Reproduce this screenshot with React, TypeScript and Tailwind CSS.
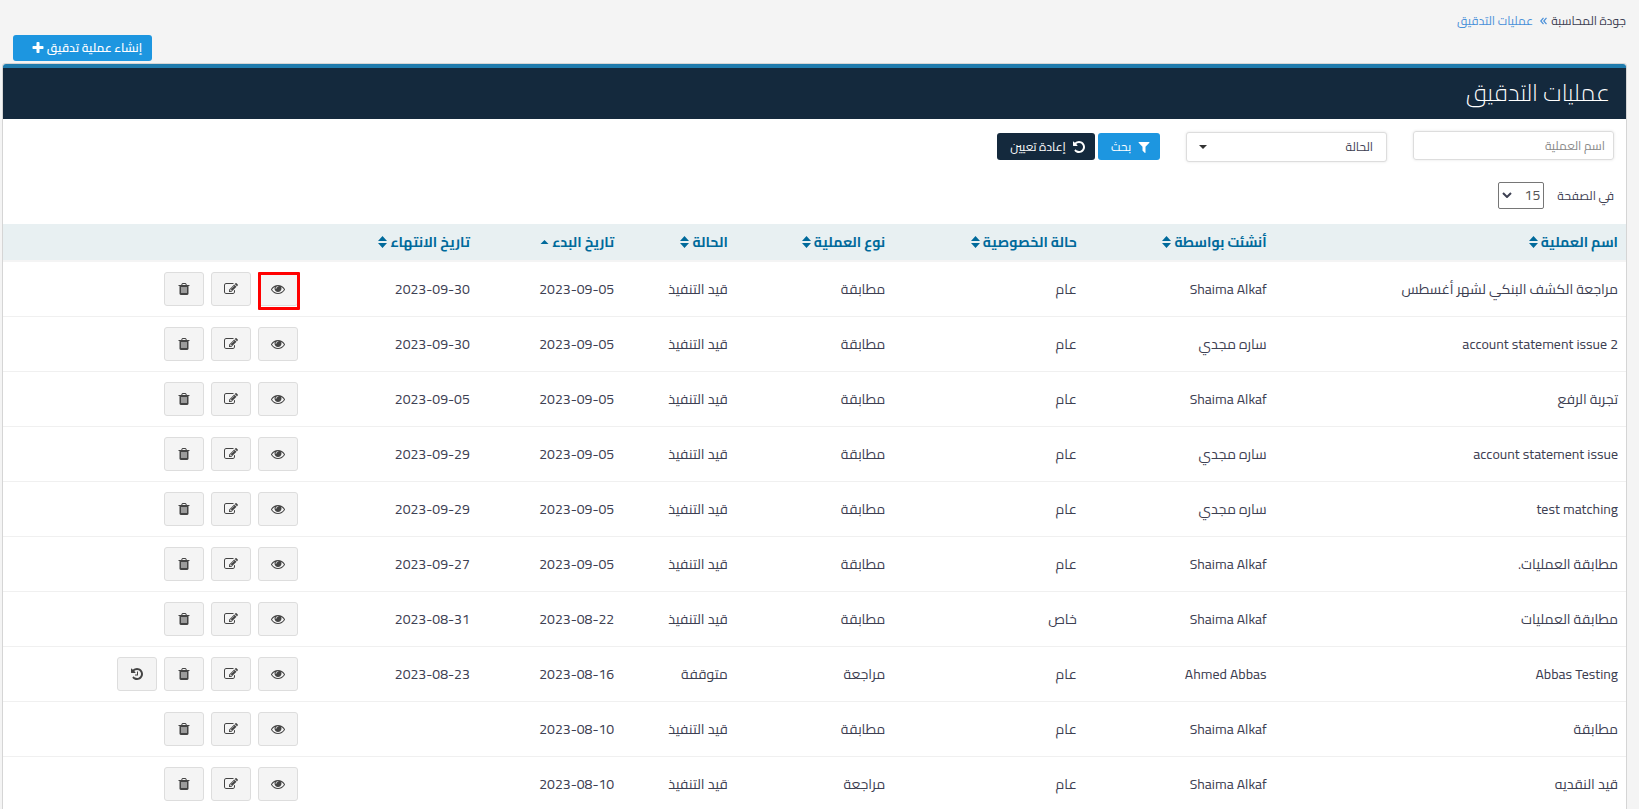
import React from "react";

const icons = {
  eye: "M1664 960q-152-236-381-353 61 104 61 225 0 185-131.5 316.5t-316.5 131.5-316.5-131.5-131.5-316.5q0-121 61-225-229 117-381 353 133 205 333.5 326.5t434.5 121.5 434.5-121.5 333.5-326.5zm-720-384q0-20-14-34t-34-14q-125 0-214.5 89.5t-89.5 214.5q0 20 14 34t34 14 34-14 14-34q0-86 61-147t147-61q20 0 34-14t14-34zm848 384q0 34-20 69-140 230-376.5 368.5t-499.5 138.5-499.5-139-376.5-368q-20-35-20-69t20-69q140-229 376.5-368t499.5-139 499.5 139 376.5 368q20 35 20 69z",
  edit: "M888 1184l116-116-152-152-116 116v56h96v96h56zm440-720q-16-16-33 1l-350 350q-17 17-1 33t33-1l350-350q17-17 1-33zm80 594v190q0 119-84.5 203.5t-203.5 84.5h-832q-119 0-203.5-84.5t-84.5-203.5v-832q0-119 84.5-203.5t203.5-84.5h832q63 0 117 25 15 7 18 23 3 17-9 29l-49 49q-14 14-32 8-23-6-45-6h-832q-66 0-113 47t-47 113v832q0 66 47 113t113 47h832q66 0 113-47t47-113v-126q0-13 9-22l64-64q15-15 35-7t20 29zm-96-738l288 288-672 672h-288v-288zm444 132l-92 92-288-288 92-92q28-28 68-28t68 28l152 152q28 28 28 68t-28 68z",
  trash: "M704 1376v-704q0-14-9-23t-23-9h-64q-14 0-23 9t-9 23v704q0 14 9 23t23 9h64q14 0 23-9t9-23zm256 0v-704q0-14-9-23t-23-9h-64q-14 0-23 9t-9 23v704q0 14 9 23t23 9h64q14 0 23-9t9-23zm256 0v-704q0-14-9-23t-23-9h-64q-14 0-23 9t-9 23v704q0 14 9 23t23 9h64q14 0 23-9t9-23zm-544-992h448l-48-117q-7-9-17-11h-317q-10 2-17 11zm928 32v64q0 14-9 23t-23 9h-96v948q0 83-47 143.5t-113 60.5h-832q-66 0-113-58.5t-47-141.5v-952h-96q-14 0-23-9t-9-23v-64q0-14 9-23t23-9h309l70-167q15-37 54-63t79-26h320q40 0 79 26t54 63l70 167h309q14 0 23 9t9 23z",
  undo: "M1664 896q0 156-61 298t-164 245-245 164-298 61q-172 0-327-72.5t-264-204.5q-7-10-6.5-22.5t8.5-20.5l137-138q10-9 25-9 16 2 23 12 73 95 179 147t225 52q104 0 198.5-40.5t163.5-109.5 109.5-163.5 40.5-198.5-40.5-198.5-109.5-163.5-163.5-109.5-198.5-40.5q-98 0-188 35.5t-160 101.5l137 138q31 30 14 69-17 40-59 40h-448q-26 0-45-19t-19-45v-448q0-42 40-59 39-17 69 14l130 129q107-101 244.5-156.5t284.5-55.5q156 0 298 61t245 164 164 245 61 298z",
  history: "M1664 896q0 156-61 298t-164 245-245 164-298 61q-172 0-327-72.5t-264-204.5q-7-10-6.5-22.5t8.5-20.5l137-138q10-9 25-9 16 2 23 12 73 95 179 147t225 52q104 0 198.5-40.5t163.5-109.5 109.5-163.5 40.5-198.5-40.5-198.5-109.5-163.5-163.5-109.5-198.5-40.5q-98 0-188 35.5t-160 101.5l137 138q31 30 14 69-17 40-59 40h-448q-26 0-45-19t-19-45v-448q0-42 40-59 39-17 69 14l130 129q107-101 244.5-156.5t284.5-55.5q156 0 298 61t245 164 164 245 61 298zm-640-288v448q0 14-9 23t-23 9h-320q-14 0-23-9t-9-23v-64q0-14 9-23t23-9h224v-352q0-14 9-23t23-9h64q14 0 23 9t9 23z",
  filter: "M1595 295q17 41-14 70l-493 493v742q0 42-39 59-13 5-25 5-27 0-45-19l-256-256q-19-19-19-45v-486l-493-493q-31-29-14-70 17-39 59-39h1280q42 0 59 39z",
  plus: "M1600 736v192q0 40-28 68t-68 28h-416v416q0 40-28 68t-68 28h-192q-40 0-68-28t-28-68v-416h-416q-40 0-68-28t-28-68v-192q0-40 28-68t68-28h416v-416q0-40 28-68t68-28h192q40 0 68 28t28 68v416h416q40 0 68 28t28 68z",
};

type IconName = keyof typeof icons;

function Icon({ name }: { name: IconName }) {
  return (
    <svg viewBox="0 0 1792 1792" fill="currentColor" aria-hidden="true" className="size-3.5 shrink-0">
      <path d={icons[name]} />
    </svg>
  );
}

function SortMark({ ascending }: { ascending?: boolean }) {
  return (
    <svg viewBox="0 0 9 12" fill="currentColor" aria-hidden="true" className="h-3 w-[9px] shrink-0">
      {ascending ? <path d="M0.5 8 4.5 4 8.5 8z" /> : <path d="M0 5 4.5 0 9 5zM0 7h9L4.5 12z" />}
    </svg>
  );
}

const columns = [
  { label: "اسم العملية", width: "w-[21.65%]" },
  { label: "أنشئت بواسطة", width: "w-[11.7%]" },
  { label: "حالة الخصوصية", width: "w-[11.8%]" },
  { label: "نوع العملية", width: "w-[9.7%]" },
  { label: "الحالة", width: "w-[7%]" },
  { label: "تاريخ البدء", width: "w-[8.9%]", ascending: true },
  { label: "تاريخ الانتهاء", width: "w-[10.6%]" },
];

const rows = [
  ["مراجعة الكشف البنكي لشهر أغسطس", "Shaima Alkaf", "عام", "مطابقة", "قيد التنفيذ", "2023-09-05", "2023-09-30"],
  ["account statement issue 2", "ساره مجدي", "عام", "مطابقة", "قيد التنفيذ", "2023-09-05", "2023-09-30"],
  ["تجربة الرفع", "Shaima Alkaf", "عام", "مطابقة", "قيد التنفيذ", "2023-09-05", "2023-09-05"],
  ["account statement issue", "ساره مجدي", "عام", "مطابقة", "قيد التنفيذ", "2023-09-05", "2023-09-29"],
  ["test matching", "ساره مجدي", "عام", "مطابقة", "قيد التنفيذ", "2023-09-05", "2023-09-29"],
  ["مطابقة العمليات.", "Shaima Alkaf", "عام", "مطابقة", "قيد التنفيذ", "2023-09-05", "2023-09-27"],
  ["مطابقة العمليات", "Shaima Alkaf", "خاص", "مطابقة", "قيد التنفيذ", "2023-08-22", "2023-08-31"],
  ["Abbas Testing", "Ahmed Abbas", "عام", "مراجعة", "متوقفة", "2023-08-16", "2023-08-23"],
  ["مطابقة", "Shaima Alkaf", "عام", "مطابقة", "قيد التنفيذ", "2023-08-10", ""],
  ["قيد النقديه", "Shaima Alkaf", "عام", "مراجعة", "قيد التنفيذ", "2023-08-10", ""],
];

function ActionButton({ icon, label }: { icon: IconName; label: string }) {
  return (
    <button
      type="button"
      aria-label={label}
      className="flex h-[34px] w-10 items-center justify-center rounded-[3px] border border-[#ddd] bg-[#f4f4f4] text-[#444]"
    >
      <Icon name={icon} />
    </button>
  );
}

export default function App() {
  return (
    <div
      dir="rtl"
      lang="ar"
      className="h-screen overflow-hidden bg-[#f4f4f4] pr-3 pl-0.5 font-[Cairo,'Open_Sans','DejaVu_Sans',sans-serif] text-sm text-[#3d4052]"
    >
      <nav aria-label="مسار التنقل" className="flex h-[35px] items-center pt-[7px] pr-px text-xs">
        <a href="#home">جودة المحاسبة</a>
        <svg viewBox="0 0 7 8" fill="none" stroke="#4a90d9" strokeWidth="1.2" aria-hidden="true" className="mr-1 ml-[7px] h-2 w-[7px]">
          <path d="M3.5 0.8 0.8 4l2.7 3.2M6.5 0.8 3.8 4l2.7 3.2" />
        </svg>
        <a href="#audits" className="text-[#4a90d9]">عمليات التدقيق</a>
      </nav>
      <div className="flex h-7 justify-end pl-[11px]">
        <button type="button" className="flex h-[26px] w-[139px] items-center gap-0.5 rounded-[3px] bg-[#1d96e0] pr-2.5 text-xs font-semibold whitespace-nowrap text-white">
          إنشاء عملية تدقيق
          <Icon name="plus" />
        </button>
      </div>

      <main className="rounded-t-[3px] border border-[#d5d5d5] bg-white">
        <header className="flex h-[55px] items-center rounded-t-[3px] border-t-4 border-[#1f7bad] bg-[#14293d] pr-4 pb-0.5">
          <h1 className="text-2xl font-light text-white">عمليات التدقيق</h1>
        </header>

        <form className="flex h-14 items-center gap-[26px] pr-3">
          <input
            type="text"
            aria-label="اسم العملية"
            placeholder="اسم العملية"
            className="mb-[3px] h-[29px] w-[201px] rounded-[3px] border border-[#ddd] px-2 text-xs shadow-[0_0_3px_#e5e5e5] placeholder:text-[#888]"
          />
          <div className="relative">
            <select
              aria-label="الحالة"
              className="block h-[30px] w-[201px] appearance-none rounded-[3px] border border-[#ddd] bg-white px-[13px] text-xs shadow-[0_0_3px_#e5e5e5]"
            >
              <option>الحالة</option>
            </select>
            <svg viewBox="0 0 8 4" fill="#333" aria-hidden="true" className="pointer-events-none absolute top-[13px] left-[13px] h-1 w-2">
              <path d="M0 0h8L4 4z" />
            </svg>
          </div>
          <div className="mb-px flex gap-[3px] text-xs text-white">
            <button type="button" className="flex h-[27px] w-[62px] items-center justify-center gap-1.5 rounded-[3px] bg-[#1d96e0] pl-1">
              <Icon name="filter" />
              بحث
            </button>
            <button type="button" className="flex h-[27px] w-[98px] items-center justify-center gap-1.5 rounded-[3px] bg-[#14293d] pl-1 whitespace-nowrap">
              <Icon name="undo" />
              إعادة تعيين
            </button>
          </div>
        </form>

        <div className="flex h-[49px] items-start gap-[13px] pt-[7px] pr-3">
          <label htmlFor="page-size" className="text-xs leading-[27px]">في الصفحة</label>
          <div className="relative">
            <select
              id="page-size"
              className="block h-[27px] w-[46px] appearance-none rounded-[2px] border border-[#767676] bg-white pr-[3px] text-sm leading-[25px] text-[#555]"
            >
              <option>15</option>
            </select>
            <svg viewBox="0 0 10 6" fill="none" stroke="#3d4052" strokeWidth="2" aria-hidden="true" className="pointer-events-none absolute top-2.5 left-1 h-1.5 w-2.5">
              <path d="M1 1 5 5 9 1" />
            </svg>
          </div>
        </div>

        <table className="w-full table-fixed border-collapse">
          <thead>
            <tr className="h-[37px] border-b-2 border-[#f4f4f4] bg-[#e8f0f2] text-[#006a9b]">
              {columns.map((column) => (
                <th key={column.label} scope="col" className={`${column.width} px-2 py-0 text-start font-bold whitespace-nowrap`}>
                  <span className="flex items-center gap-[3px]">
                    {column.label}
                    <SortMark ascending={column.ascending} />
                  </span>
                </th>
              ))}
              <td />
            </tr>
          </thead>
          <tbody>
            {rows.map((row, index) => (
              <tr key={index} className="h-[55px] border-b border-[#f0f0f0]">
                {row.map((cell, cellIndex) => (
                  <td key={cellIndex} className="px-2 py-0 whitespace-nowrap">
                    <bdi>{cell}</bdi>
                  </td>
                ))}
                <td className="px-2 py-0">
                  <div className="relative flex gap-[7px]">
                    <ActionButton icon="eye" label="عرض" />
                    <ActionButton icon="edit" label="تعديل" />
                    <ActionButton icon="trash" label="حذف" />
                    {index === 7 && <ActionButton icon="history" label="استعادة" />}
                    {index === 0 && (
                      <span className="pointer-events-none absolute top-0 -right-0.5 h-[38px] w-[42px] rounded-[1px] border-3 border-[#f00]" />
                    )}
                  </div>
                </td>
              </tr>
            ))}
          </tbody>
        </table>
      </main>
    </div>
  );
}
